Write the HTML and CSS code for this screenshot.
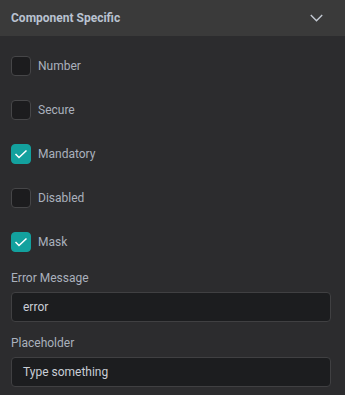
FILE: index.html
```html
<!DOCTYPE html>
<html>
<head>
<meta charset="utf-8">
<link rel="stylesheet" href="styles.css">
</head>
<body>
<div class="panel">
  <div class="header">
    <span class="title">Component Specific</span>
    <svg class="chevron" width="13" height="8" viewBox="0 0 13 8"><path d="M0.8 1 L6.5 6.7 L12.2 1" fill="none" stroke="#c4cad4" stroke-width="1.4"/></svg>
  </div>
  <div class="content">
    <div class="checks">
      <label class="row"><span class="box"></span><span class="label">Number</span></label>
      <label class="row"><span class="box"></span><span class="label">Secure</span></label>
      <label class="row"><span class="box on"><svg width="14" height="10" viewBox="0 0 14 10"><path d="M1.5 5 L5 8.5 L12.5 1.5" fill="none" stroke="#ffffff" stroke-width="1.5"/></svg></span><span class="label">Mandatory</span></label>
      <label class="row"><span class="box"></span><span class="label">Disabled</span></label>
      <label class="row"><span class="box on"><svg width="14" height="10" viewBox="0 0 14 10"><path d="M1.5 5 L5 8.5 L12.5 1.5" fill="none" stroke="#ffffff" stroke-width="1.5"/></svg></span><span class="label">Mask</span></label>
    </div>
    <div class="field first">
      <div class="flabel">Error Message</div>
      <div class="input">error</div>
    </div>
    <div class="field">
      <div class="flabel">Placeholder</div>
      <div class="input">Type something</div>
    </div>
  </div>
</div>
</body>
</html>
```
FILE: styles.css
```css
html, body {
  margin: 0;
  padding: 0;
  background: #2c2c2e;
}
body {
  font-family: Roboto, "Liberation Sans", sans-serif;
  width: 345px;
  height: 395px;
  overflow: hidden;
}
.header {
  height: 36px;
  background: #3a3a3a;
  display: flex;
  align-items: center;
  justify-content: space-between;
  padding: 0 22px 0 11px;
}
.title {
  font-size: 12px;
  font-weight: 700;
  color: #b9c2d0;
}
.chevron {
  display: block;
}
.content {
  padding: 8px 14px 0 11px;
}
.row {
  height: 44px;
  display: flex;
  align-items: center;
  gap: 7px;
}
.box {
  width: 18px;
  height: 18px;
  border: 1px solid #464648;
  border-radius: 4px;
  background: #1c1c1e;
  display: flex;
  align-items: center;
  justify-content: center;
}
.box.on {
  background: #13a19e;
  border-color: #13a19e;
}
.label {
  font-size: 12px;
  color: #aab1bd;
}
.field.first {
  margin-top: 6px;
}
.field {
  margin-top: 13px;
}
.flabel {
  font-size: 12px;
  line-height: 16px;
  color: #aab1bd;
  margin-bottom: 6px;
}
.input {
  height: 28px;
  border: 1px solid #404042;
  border-radius: 4px;
  background: #1c1d1f;
  box-sizing: content-box;
  display: flex;
  align-items: center;
  padding: 0 11px;
  font-size: 12px;
  color: #c9ced6;
}
```
